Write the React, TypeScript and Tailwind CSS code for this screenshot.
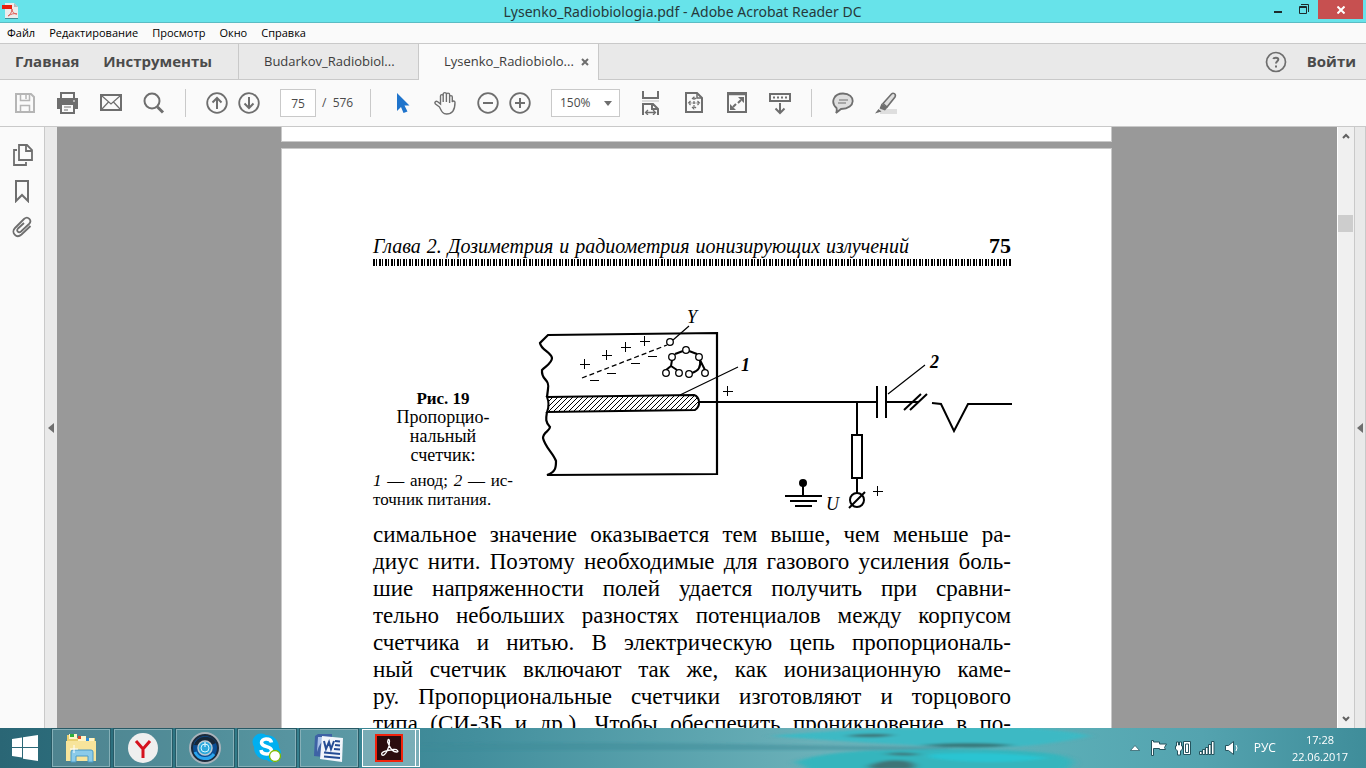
import { useState } from "react";
import type { ReactNode } from "react";

type IconProps = { children: ReactNode; label: string; className?: string };

const bodyLines = [
  "симальное значение оказывается тем выше, чем меньше ра-",
  "диус нити. Поэтому необходимые для газового усиления боль-",
  "шие напряженности полей удается получить при сравни-",
  "тельно небольших разностях потенциалов между корпусом",
  "счетчика и нитью. В электрическую цепь пропорциональ-",
  "ный счетчик включают так же, как ионизационную каме-",
  "ру. Пропорциональные счетчики изготовляют и торцового",
  "типа (СИ-3Б и др.). Чтобы обеспечить проникновение в по-",
];

const menuItems = ["Файл", "Редактирование", "Просмотр", "Окно", "Справка"];

const ToolButton = ({ children, label, className = "text-[#6e6e6e]" }: IconProps) => (
  <button aria-label={label} className={`h-6 w-[22px] shrink-0 ${className}`}>
    <svg
      viewBox="0 0 22 24"
      className="h-6 w-[22px]"
      fill="none"
      stroke="currentColor"
      strokeWidth="2"
    >
      {children}
    </svg>
  </button>
);

const Divider = () => <div className="h-7 w-px shrink-0 bg-[#c9c9c9]" />;

const TitleBar = () => (
  <header className="flex h-[23px] shrink-0 items-start border-b border-[#5bbcc4] bg-[#67e3ea]">
    <div className="flex-1 pl-[2px] pt-[3px]">
      <svg viewBox="0 0 16 16" className="h-4 w-4">
        <path d="M3 0h9l4 4v12H3z" fill="#ececec" />
        <path d="M12 0v4h4z" fill="#b9b9b9" />
        <path d="M0 2h10v4H0z" fill="#e8200c" />
        <path
          d="M6 13c2-1 4-4 4-7 0 3 2 5 5 5-3-1-6 0-9 2z"
          fill="none"
          stroke="#e0605a"
          strokeWidth="1"
        />
        <path d="M3 15h13v1H3z" fill="#3f8f96" />
      </svg>
    </div>
    <h1 className="font-['Noto_Sans',sans-serif] text-sm leading-[23px] text-[#26393b]">
      Lysenko_Radiobiologia.pdf - Adobe Acrobat Reader DC
    </h1>
    <div className="flex flex-1 justify-end pr-[3px]">
      <button aria-label="Свернуть" className="h-[19px] w-[27px]">
        <svg viewBox="0 0 27 19" className="h-[19px] w-[27px]">
          <path d="M10 11h8v2h-8z" fill="#1d2b2c" />
        </svg>
      </button>
      <button aria-label="Восстановить" className="h-[19px] w-[27px]">
        <svg viewBox="0 0 27 19" className="h-[19px] w-[27px]" fill="none" stroke="#1d2b2c">
          <path d="M8.500 6.500h7v7h-7zM8 7.500h8M10 4.500h7.500V12" />
        </svg>
      </button>
      <button
        aria-label="Закрыть"
        className="flex h-[19px] w-[45px] items-center justify-center bg-[#c75050]"
      >
        <svg viewBox="0 0 8 8" className="h-2 w-2" stroke="#fff" strokeWidth="2">
          <path d="M.5 .5l7 7M7.500 .5l-7 7" />
        </svg>
      </button>
    </div>
  </header>
);

const MenuBar = () => (
  <nav className="flex h-[21px] shrink-0 items-center gap-[14px] border-b border-[#c9c9c9] bg-[#fafafa] pl-[7px] text-[11px] text-black">
    {menuItems.map((item) => (
      <button key={item}>{item}</button>
    ))}
  </nav>
);

const TabBar = () => (
  <div className="flex h-9 shrink-0 border-b border-[#c9c9c9] bg-[#e9e9e9] text-[13px] text-[#3c3c3c]">
    <div className="flex w-[239px] items-center justify-between border-r border-[#c9c9c9] pl-[15px] pr-[26px] text-[15px] font-bold text-[#4b4b4b]">
      <button>Главная</button>
      <button>Инструменты</button>
    </div>
    <button className="w-[179px] pl-[25px] text-left">Budarkov_Radiobiol...</button>
    <div className="-mb-px flex w-[181px] items-center border-x border-[#c9c9c9] bg-[#fafafa] pl-[25px]">
      <button>Lysenko_Radiobiolo...</button>
      <button aria-label="Закрыть вкладку" className="ml-auto mr-[9px]">
        <svg viewBox="0 0 8 8" className="h-2 w-2" stroke="#6e6e6e" strokeWidth="2">
          <path d="M1 1l6 6M7 1l-6 6" />
        </svg>
      </button>
    </div>
    <div className="ml-auto flex items-center gap-5 pr-[10px] text-[15px] font-bold text-[#4b4b4b]">
      <button aria-label="Помощь">
        <svg
          viewBox="0 0 22 22"
          className="h-[22px] w-[22px]"
          fill="none"
          stroke="#6e6e6e"
          strokeWidth="2"
        >
          <circle cx="11" cy="11" r="9.500" strokeWidth="1.700" />
          <path d="M8.300 8c.4-1.700 5-2 5 .4 0 1.800-2.300 1.800-2.300 4.200M11 14.500v2" />
        </svg>
      </button>
      <button>Войти</button>
    </div>
  </div>
);

const Toolbar = () => {
  const [page, setPage] = useState<string>("75");
  const [zoom, setZoom] = useState<string>("150%");
  return (
    <div className="flex h-[47px] shrink-0 items-center gap-5 border-b border-[#c9c9c9] bg-[#fafafa] pl-[14px] text-xs text-[#4b4b4b]">
      <div className="flex gap-[21px]">
        <ToolButton label="Сохранить" className="text-[#b5b5b5]">
          <path d="M2 3h15l3 3v15H2z" />
          <path d="M6.500 3v6.500h9V3M12 4v4M6.500 21v-6.500h9V21" strokeWidth="1.500" />
        </ToolButton>
        <ToolButton label="Печать">
          <path d="M4 7V2h13v5" />
          <path d="M1 8h19v9H1z" fill="currentColor" />
          <path d="M4 13h13v9H4z" fill="#fafafa" />
          <path d="M7 16h7M7 19h4" strokeWidth="1" />
          <path d="M16 10h2" stroke="#fafafa" strokeWidth="1" />
        </ToolButton>
        <ToolButton label="Письмо">
          <path d="M1 4h20v15H1z" />
          <path d="M2 5l9 8 9-8M2 18l6.500-7M20 18l-6.500-7" strokeWidth="1.200" />
        </ToolButton>
        <ToolButton label="Найти">
          <circle cx="9" cy="10" r="7.500" />
          <path d="M14.500 16l5.500 5.500" strokeWidth="3" />
        </ToolButton>
      </div>
      <Divider />
      <div className="flex gap-[10px]">
        <ToolButton label="Предыдущая страница">
          <circle cx="11" cy="12" r="9.800" strokeWidth="1.800" />
          <path d="M11 18V7M6.500 11.500L11 7l4.500 4.500" />
        </ToolButton>
        <ToolButton label="Следующая страница">
          <circle cx="11" cy="12" r="9.800" strokeWidth="1.800" />
          <path d="M11 6v11M6.500 12.500L11 17l4.500-4.500" />
        </ToolButton>
      </div>
      <label className="flex items-center gap-[6px]">
        <input
          aria-label="Номер страницы"
          value={page}
          onChange={(e) => setPage(e.target.value)}
          className="h-7 w-9 border border-[#c9c9c9] bg-white text-center"
        />
        <span className="w-7 whitespace-nowrap">/&nbsp; 576</span>
      </label>
      <Divider />
      <div className="flex gap-[21px]">
        <ToolButton label="Выделение" className="text-[#1f74cc]">
          <path
            d="M6 2v18l4-4 2.500 6 4-1.500-3-6h5z"
            fill="currentColor"
            stroke="none"
          />
        </ToolButton>
        <ToolButton label="Рука">
          <path
            d="M5.500 16L1.500 13c-1.500-1.800.5-3.500 2.200-2.200L6.500 13V5c0-1.800 2.700-1.800 2.700 0v6V3c0-1.800 3.200-1.800 3.200 0v8V3.500c0-1.800 3.200-1.800 3.200 0V12V6c0-1.800 2.700-1.800 2.700 0V11c.3-1.500 2.700-1.500 2.700.5C21 18 19 23 12.500 23c-4 0-5-3-7-7z"
            strokeWidth="1.400"
          />
        </ToolButton>
        <ToolButton label="Уменьшить">
          <circle cx="11" cy="12" r="9.800" strokeWidth="1.800" />
          <path d="M6 12h10" />
        </ToolButton>
        <div className="-ml-[11px] flex">
          <ToolButton label="Увеличить">
            <circle cx="11" cy="12" r="9.800" strokeWidth="1.800" />
            <path d="M6 12h10M11 7v10" />
          </ToolButton>
        </div>
      </div>
      <div className="relative">
        <select
          aria-label="Масштаб"
          value={zoom}
          onChange={(e) => setZoom(e.target.value)}
          className="block h-7 w-[69px] appearance-none border border-[#c9c9c9] bg-white pl-2"
        >
          <option>100%</option>
          <option>150%</option>
          <option>200%</option>
        </select>
        <svg
          viewBox="0 0 8 5"
          className="pointer-events-none absolute right-2 top-3 h-[5px] w-2"
        >
          <path d="M0 0h8L4 5z" fill="#6e6e6e" />
        </svg>
      </div>
      <div className="flex gap-[21px]">
        <ToolButton label="По ширине">
          <path d="M3 0v7h15V0" />
          <path d="M2 10h17" stroke="#dcdcdc" />
          <path d="M3 24V13h10l5 5v6M12 13v5h6" />
          <path d="M6 21.500h9M8 19l-2.500 2.500L8 24M13 19l2.500 2.500L13 24" strokeWidth="1.300" />
        </ToolButton>
        <ToolButton label="Страница целиком">
          <path d="M3 2h11l5 5v14H3z" />
          <path d="M14 2v5h5" strokeWidth="1.500" />
          <path
            d="M11 6v11M5.500 12h11M9 8l2-2 2 2M9 16l2 2 2-2M7.500 10l-2 2 2 2M14.500 10l2 2-2 2"
            strokeWidth="1.200"
            strokeDasharray="3 1"
          />
        </ToolButton>
        <ToolButton label="Полный экран">
          <path d="M2 2h18v19H2z" />
          <path d="M2 3h18" strokeWidth="2.500" />
          <path d="M12 6h6v6zM4 13v6h6z" fill="currentColor" stroke="none" />
          <path d="M15 9l-3 3M7 16l3-3" />
        </ToolButton>
        <ToolButton label="Режим чтения">
          <path d="M1 3h20v7H1z" />
          <path d="M4 6.500h14" strokeDasharray="2 2" />
          <path d="M11 12v10M6.500 17.500L11 22l4.500-4.500" />
        </ToolButton>
      </div>
      <Divider />
      <div className="flex gap-[21px]">
        <ToolButton label="Комментарий">
          <path
            d="M4.500 17C-2 11 2 2.500 11 2.500c13 0 13.500 15.500-2 15.500L4 22c1-2 1-3 .5-5z"
            fill="#dedede"
            strokeWidth="1.800"
          />
          <path d="M7 9h9M6 12h8" strokeWidth="1.200" />
        </ToolButton>
        <ToolButton label="Маркер">
          <path d="M5 18h17v5H5z" fill="#dedede" stroke="none" />
          <path
            d="M8 12.500L16.500 3c1.500-1.500 5-.5 3.500 3L12 16z"
            fill="#dedede"
            strokeWidth="1.600"
          />
          <path d="M6.500 12.500l6 4-2.500 3-5.500-2zM3.500 18l3 2.500-6.500 2z" fill="currentColor" stroke="none" />
        </ToolButton>
      </div>
    </div>
  );
};

const SideRail = () => (
  <aside className="flex w-[45px] shrink-0 flex-col items-center gap-3 border-r border-[#c9c9c9] bg-[#fafafa] pl-[2px] pt-4">
    <ToolButton label="Миниатюры страниц">
      <path d="M7 2h8l5 5v10H7z" strokeWidth="1.800" />
      <path d="M14 2v6h6M5 7H2v15h12v-3" strokeWidth="1.800" />
    </ToolButton>
    <ToolButton label="Закладки">
      <path d="M4 2h12v20l-6-6-6 6z" />
    </ToolButton>
    <ToolButton label="Вложения">
      <path
        d="M18.500 11l-9 8.500c-5 4.500-11-2-6.500-6.500l9-9c4-3.500 8.500 1.500 5 5l-8 7.500c-2.500 2-5-.8-3-3l6-5.500"
        strokeWidth="1.800"
      />
    </ToolButton>
  </aside>
);

const Figure = () => (
  <svg
    viewBox="534 300 480 215"
    className="h-[215px] w-[480px] shrink-0"
    fill="none"
    stroke="#000"
    strokeWidth="2"
  >
    <defs>
      <pattern id="hatch" width="5" height="5" patternUnits="userSpaceOnUse">
        <path d="M-1 6L6 -1M-1 1L1 -1M4 6L6 4" stroke="#000" strokeWidth="1" />
      </pattern>
    </defs>
    <path
      d="M547 397L548 389C550 378 541 381 542 370C546 366 552 363 552 358C551 352 541 350 540 343L548 335L717 333V474L547 475C556 472 556 467 556 461C553 453 545 447 543 438C543 432 550 431 550 427C545 422 546 418 547 412"
      strokeWidth="2.200"
    />
    <path
      d="M547 397L694 395C700 397 701 406 695 410L547 412C549 407 549 402 547 397z"
      fill="url(#hatch)"
    />
    <path d="M699 402H877M886 402H919M877 386V418M886 386V418M904 410L921 394M910 410L927 394" />
    <path d="M932 403L941 404L954 431L968 404H1012M857 402V435M857 478V493" />
    <path d="M852 435H862V478H852z" />
    <circle cx="857" cy="500" r="7" />
    <path d="M849 508L865 492M803 483V495M785 496H822M790 501H817M795 506H812" />
    <circle cx="803" cy="483" r="3" fill="#000" />
    <path d="M666 370L671 366L672 360M671 366L677 370M675 354L683 351M689 351L697 354M692 373C699 371 701 366 700 360L705 370" />
    <g strokeWidth="1">
      <path d="M582 378L667 345" strokeDasharray="5 3" strokeWidth="1.300" />
      <path d="M673 340L689 326M680 395L738 367M888 394L925 365" strokeWidth="1.200" />
      <path d="M580 364.500h10M584.500 359v10M602 355.500h10M606.500 350v10M621 347.500h10M625.500 342v10M640 341.500h10M644.500 336v10M723 391.500h10M727.500 386v10M873 491.500h10M877.500 486v10" />
      <path d="M590 380.500h9M607 373.500h9M631 363.500h9M648 356.500h9" />
    </g>
    <g fill="#fff" strokeWidth="1.300">
      <circle cx="670" cy="342" r="3.300" />
      <circle cx="672" cy="357" r="3.300" />
      <circle cx="686" cy="350" r="3.300" />
      <circle cx="699" cy="357" r="3.300" />
      <circle cx="666" cy="373" r="3.300" />
      <circle cx="679" cy="373" r="3.300" />
      <circle cx="689" cy="374" r="3.300" />
      <circle cx="705" cy="373" r="3.300" />
    </g>
    <g
      fill="#000"
      stroke="none"
      className="font-['Liberation_Serif',serif] text-[18px] italic"
    >
      <text x="687" y="323">Y</text>
      <text x="826" y="510">U</text>
      <text x="741" y="371" className="font-bold">1</text>
      <text x="930" y="368" className="font-bold">2</text>
    </g>
  </svg>
);

const DocumentPage = () => (
  <article className="mx-auto w-[831px] flex-1 border border-[#c9c9c9] bg-white pl-[91px] pr-[100px] font-['Liberation_Serif',serif] text-black">
    <header className="mt-[84px] flex items-baseline justify-between leading-[26px]">
      <h2 className="w-[536px] whitespace-nowrap text-xl leading-[26px] italic [text-align-last:justify]">
        Глава 2. Дозиметрия и радиометрия ионизирующих излучений
      </h2>
      <span className="text-[22px] font-bold">75</span>
    </header>
    <div className="h-[7px] bg-[repeating-linear-gradient(90deg,#000_0_2px,#fff_2px_3px,#000_3px_4px,#fff_4px_6px)]" />
    <figure className="mt-[34px] flex h-[215px] gap-[21px]">
      <figcaption className="w-[140px] shrink-0 pt-[89px] text-center">
        <b className="block text-[17px] leading-[19px]">Рис. 19</b>
        <p className="text-lg leading-[19px]">
          Пропорцио-
          <br />
          нальный
          <br />
          счетчик:
        </p>
        <p className="mt-[6px] whitespace-nowrap text-left text-[17px] leading-[19px]">
          <span className="block [text-align-last:justify]">
            <i>1</i> — анод; <i>2</i> — ис-
          </span>
          точник питания.
        </p>
      </figcaption>
      <Figure />
    </figure>
    <div className="mt-[6px] text-[23px] leading-[27px]">
      {bodyLines.map((line) => (
        <p key={line} className="whitespace-nowrap [text-align-last:justify]">
          {line}
        </p>
      ))}
    </div>
  </article>
);

const Splitter = ({ d, label }: { d: string; label: string }) => (
  <button aria-label={label} className="flex h-full items-center justify-center">
    <svg viewBox="0 0 6 10" className="h-[10px] w-[6px]">
      <path d={d} fill="#6e6e6e" />
    </svg>
  </button>
);

const ScrollBar = () => (
  <div className="flex w-[18px] shrink-0 flex-col items-center border-x border-l-white border-r-[#c9c9c9] bg-[#f0f0f0] py-[6px]">
    <svg viewBox="0 0 8 6" className="h-[6px] w-2" fill="none" stroke="#606060" strokeWidth="2">
      <path d="M1 5l3-3 3 3" />
    </svg>
    <div className="mt-[76px] h-[17px] w-[15px] self-start bg-[#cdcdcd]" />
    <svg
      viewBox="0 0 8 6"
      className="mt-auto h-[6px] w-2"
      fill="none"
      stroke="#606060"
      strokeWidth="2"
    >
      <path d="M1 1l3 3 3-3" />
    </svg>
  </div>
);

const Water = () => (
  <svg
    viewBox="0 0 1366 40"
    preserveAspectRatio="none"
    className="absolute inset-0 h-full w-full"
  >
    <defs>
      <linearGradient id="sea">
        <stop offset="0" stopColor="#2a6675" />
        <stop offset=".15" stopColor="#2f7886" />
        <stop offset=".35" stopColor="#438f9d" />
        <stop offset=".6" stopColor="#6bb1b9" />
        <stop offset=".75" stopColor="#5cb0b8" />
        <stop offset=".88" stopColor="#54a3af" />
        <stop offset="1" stopColor="#3f8d9a" />
      </linearGradient>
      <filter id="soft" x="-10%" y="-50%" width="120%" height="200%">
        <feGaussianBlur stdDeviation="5 1" />
      </filter>
    </defs>
    <path d="M0 0h1366v40H0z" fill="url(#sea)" />
    <g filter="url(#soft)">
      <path d="M400 17q200-4 400 0 100 2 150 2v3H400z" fill="#3b8b98" opacity=".5" />
      <path d="M770 8q60-6 150-8h110q50 4 60 8-60 14-140 11-90-4-180-11z" fill="#3cb9c4" />
      <path d="M795 34q30-12 110-12 90-3 150 4 30 6 10 16H810z" fill="#35b5bd" />
      <path d="M845 8q22-4 50-1-20 4-50 1zM884 26q15-3 36 0-10 3-36 0zM868 38q15-8 40-5 12 4 4 8h-40z" fill="#3d7477" />
      <path d="M920 17q50-4 95 0-40 5-95 0z" fill="#38787a" />
      <path d="M930 26q70-3 120 4-60 8-120 0z" fill="#29c4d2" />
    </g>
  </svg>
);

const TaskButton = ({ children, label }: { children: ReactNode; label: string }) => (
  <button
    aria-label={label}
    className="flex h-[38px] w-[58px] items-center justify-center border border-[#86b0b8] bg-[#ffffff2b] outline-1 outline-[#275a66]"
  >
    <svg viewBox="0 0 32 32" className="h-8 w-8">
      {children}
    </svg>
  </button>
);

const TaskBar = () => (
  <footer className="relative h-10 shrink-0">
    <Water />
    <div className="relative flex h-full items-center">
      <button aria-label="Пуск" className="flex w-[52px] justify-center pr-[2px]">
        <svg viewBox="0 0 26 26" className="h-[26px] w-[26px]" fill="#fff">
          <path d="M0 4L10 2.500V12H0zM11 2.300L26 0v12H11zM0 13h10v9.500L0 21zM11 13h15v13l-15-2.300z" />
        </svg>
      </button>
      <div className="flex gap-1">
        <TaskButton label="Проводник">
          <path d="M2 3h8l2 3h18v22H2z" fill="#e9cf70" />
          <path d="M4 2h8v5H4zM13 4h8v5h-8zM20 6h9v5h-9z" fill="#fff5c8" />
          <path d="M5 2h4v3H5z" fill="#2eae3c" />
          <path d="M13 4h3v3h-3z" fill="#d9482c" />
          <path d="M21 6h3v3h-3z" fill="#2f8cd8" />
          <path d="M1 9h30v20H1z" fill="#f7e49b" />
          <path d="M6 30V20q0-2 2-2h18q2 0 2 2v10h-5v-6H11v6z" fill="#8bcbe9" stroke="#4a9ac6" />
          <path d="M9 13v8M5 17h8" stroke="#fff" />
        </TaskButton>
        <TaskButton label="Яндекс">
          <circle cx="16" cy="16" r="15" fill="#efefef" />
          <path
            d="M9 9l7 8 7-8M16 16v10"
            fill="none"
            stroke="#d5121e"
            strokeWidth="3"
          />
        </TaskButton>
        <TaskButton label="Плеер">
          <circle cx="16" cy="16" r="15" fill="#1c2b3c" stroke="#a9b3bb" strokeWidth="2" />
          <circle cx="16" cy="16" r="12" fill="#0b4e94" />
          <path d="M5 13A12 12 0 0 1 27 11L20 14z" fill="#182838" />
          <path d="M6 20A11 11 0 0 0 25 22" stroke="#2aa5ef" strokeWidth="3" fill="none" />
          <circle cx="16" cy="16" r="7" fill="#2ca8dc" stroke="#b9c9d3" strokeWidth="1.500" />
          <circle cx="16" cy="16" r="4" fill="none" stroke="#d4f6ff" />
          <path d="M16 10v5" stroke="#fff" />
        </TaskButton>
        <TaskButton label="Skype">
          <circle cx="10" cy="10" r="8.500" fill="#00aff0" />
          <circle cx="21" cy="21" r="9" fill="#00aff0" />
          <circle cx="15.500" cy="15.500" r="12.500" fill="#00aff0" />
          <path
            d="M20.500 10.500c-1-5-10.500-4.500-10 .3.500 5 10 2.700 10 7.700 0 5-10 4.500-10.500-.5"
            fill="none"
            stroke="#fff"
            strokeWidth="3.500"
          />
          <circle cx="24" cy="24" r="5.500" fill="#fff" stroke="#7fba00" strokeWidth="1.300" />
        </TaskButton>
        <TaskButton label="Word">
          <path d="M2 4l3-2h14v24L1 24z" fill="#3e62a5" />
          <path d="M5 5h10v2Q7 8 4 20z" fill="#a9c2ea" />
          <path d="M9 4l21 2-1 24-22-3z" fill="#f1f5fb" />
          <path
            d="M11 9l2 8 3-7 2 7 3-8M22 9l5 .5M22 13l5 .5M21 17l6 .5M11 20.500l16 1.500M11 24.500l16 1.500"
            fill="none"
            stroke="#244c94"
            strokeWidth="2"
          />
        </TaskButton>
        <div className="flex h-[38px] border border-white bg-[#ffffff50] pr-[3px]">
          <button
            aria-label="Adobe Acrobat Reader"
            className="flex w-[53px] items-center justify-center border-r border-white"
          >
            <svg viewBox="0 0 28 28" className="h-7 w-7">
              <path d="M1 1h26v26H1z" fill="#2b0d0e" stroke="#f0230c" strokeWidth="2" />
              <path
                d="M7 21c3 2 8-8 7.500-14-.5-3-3-1-1 3 2 5 5 8 8 8s1-3-3-2.500c-4 .5-14 2-11.500 5.500z"
                fill="none"
                stroke="#fff"
                strokeWidth="1.300"
              />
            </svg>
          </button>
        </div>
      </div>
      <div className="ml-auto flex items-center pr-[18px] text-xs text-white">
        <svg viewBox="0 0 112 18" className="h-[18px] w-28" fill="#fff" stroke="#24535d">
          <path d="M.5 11.500h9L5 6.500z" strokeWidth=".7" />
          <path d="M21.500 1.500h2V3h6v2h7l-2 3.500 1 2h-6v-1h-6v7h-2z" />
          <path d="M53.500 2.500h7v13h-7zM45.500 7h1V3h2v3h1V3h2v4h1v3l-2 2v4h-3v-4l-2-2z" />
          <path d="M55.500 5h3v8.500h-3z" />
          <path d="M69.500 12.500h2.500v3h-2.500zM72.500 10.500H75v5h-2.500zM75.500 8.500H78v7h-2.500zM78.500 5.500H81v10h-2.500zM81.500 2.500H84v13h-2.500z" />
          <path d="M95.500 6.500h3l5-4v13l-5-4h-3z" />
          <path d="M106 6q2 3 0 6" fill="none" stroke="#fff" />
        </svg>
        <button className="ml-3">РУС</button>
        <time className="ml-4 flex flex-col text-center text-[11px] leading-[17px]">
          <span>17:28</span>
          <span>22.06.2017</span>
        </time>
      </div>
    </div>
  </footer>
);

const App = () => {
  return (
    <div className="flex h-screen flex-col overflow-hidden bg-[#999] font-['Open_Sans','Noto_Sans',sans-serif]">
      <TitleBar />
      <MenuBar />
      <TabBar />
      <Toolbar />
      <div className="flex min-h-0 flex-1">
        <SideRail />
        <div className="w-3 shrink-0 bg-[#e9e9e9] pl-[3px]">
          <Splitter d="M6 0v10L0 5z" label="Панель навигации" />
        </div>
        <main className="flex min-w-0 flex-1 flex-col overflow-hidden pr-px">
          <div className="mx-auto h-[15px] w-[831px] shrink-0 border border-t-0 border-[#c9c9c9] bg-white" />
          <div className="h-[6px] shrink-0" />
          <DocumentPage />
        </main>
        <ScrollBar />
        <div className="w-[11px] shrink-0 border-r border-[#c9c9c9] bg-[#e9e9e9] pl-[2px]">
          <Splitter d="M6 0v10L0 5z" label="Панель инструментов" />
        </div>
      </div>
      <TaskBar />
    </div>
  );
};
export default App;
